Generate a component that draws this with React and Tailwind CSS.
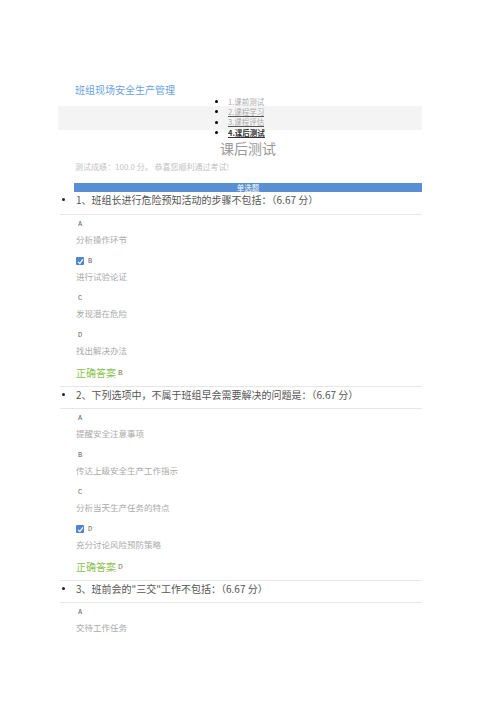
const navItems = [
  { label: '1.课前测试', cls: 'text-[#aaaaaa]' },
  { label: '2.课程学习', cls: 'text-[#aaaaaa] border-b border-[#555]' },
  { label: '3.课程评估', cls: 'text-[#aaaaaa] border-b border-[#555]' },
  { label: '4.课后测试', cls: 'text-[#333] font-bold border-b border-[#333]' },
]

const questions = [
  {
    title: '1、班组长进行危险预知活动的步骤不包括：（6.67 分）',
    options: [
      ['A', '分析操作环节'],
      ['B', '进行试验论证'],
      ['C', '发现潜在危险'],
      ['D', '找出解决办法'],
    ],
    picked: 'B',
    first: true,
  },
  {
    title: '2、下列选项中，不属于班组早会需要解决的问题是：（6.67 分）',
    options: [
      ['A', '提醒安全注意事项'],
      ['B', '传达上级安全生产工作指示'],
      ['C', '分析当天生产任务的特点'],
      ['D', '充分讨论风险预防策略'],
    ],
    picked: 'D',
  },
  {
    title: '3、班前会的"三交"工作不包括：（6.67 分）',
    options: [['A', '交待工作任务']],
    picked: null,
    partial: true,
  },
]

function Check() {
  return (
    <span className="flex h-[8px] w-[8px] items-center justify-center rounded-[1px] bg-[#4f86cf]">
      <svg width="7" height="7" viewBox="0 0 10 10">
        <path d="M1.5 5.5 L4 8 L8.5 2" fill="none" stroke="#fff" strokeWidth="1.8" />
      </svg>
    </span>
  )
}

function Question({ q }) {
  return (
    <li>
      <div
        className={`relative flex h-[23px] items-start border-b ${
          q.first ? '' : 'border-t'
        } border-[#e6e6e6] pt-[1px]`}
      >
        <span className="absolute left-[2px] top-[6px] h-[3px] w-[3px] rounded-full bg-[#222]" />
        <span className="ml-[16px] text-[10px] leading-[14px] text-[#555]">{q.title}</span>
      </div>
      <div className="pl-[16px] pt-[2px]">
        {q.options.map(([k, text]) => (
          <div key={k} className="mb-[7px]">
            <div className="flex h-[14px] items-center gap-[2px]">
              {q.picked === k && <Check />}
              <span className="font-['Liberation_Mono',monospace] text-[7px] text-[#666] pl-[2px]">{k}</span>
            </div>
            <div className="h-[16px] text-[8.5px] leading-[16px] text-[#aaaaaa]">{text}</div>
          </div>
        ))}
        {q.picked && (
          <div className="mb-[5px] flex h-[16px] items-center text-[10px] leading-[16px] text-[#8cc152]">
            正确答案
            <span className="ml-[2px] font-['Liberation_Mono',monospace] text-[8px] text-[#7d7d4a]">{q.picked}</span>
          </div>
        )}
      </div>
    </li>
  )
}

export default function App() {
  return (
    <div className="h-[702px] w-[496px] overflow-hidden bg-white pt-[84px] font-['Noto_Sans_CJK_SC','Liberation_Sans',sans-serif]">
      <div className="h-[12px] pl-[75px] text-[10px] leading-[12px] text-[#6aa3e0]">班组现场安全生产管理</div>

      <div className="ml-[58px] w-[364px] bg-[linear-gradient(to_bottom,transparent_10px,#f4f4f4_10px,#f4f4f4_34px,transparent_34px)]">
        <ul className="pl-[157px]">
          {navItems.map((n) => (
            <li key={n.label} className="flex h-[10.5px] items-center gap-[10px]">
              <span className="h-[3px] w-[3px] rounded-full bg-black" />
              <span className={`text-[7.5px] leading-[9px] ${n.cls}`}>{n.label}</span>
            </li>
          ))}
        </ul>
      </div>

      <div className="mt-[1px] h-[18px] text-center text-[14px] leading-[18px] text-[#999]">课后测试</div>

      <div className="mt-[4px] h-[12px] pl-[75px] text-[8px] leading-[12px] text-[#c2c2c2]">
        测试成绩：100.0 分。 恭喜您顺利通过考试!
      </div>

      <div className="ml-[74px] mt-[10px] flex h-[9px] w-[348px] items-center justify-center bg-[#5a8ed3] text-[7.5px] leading-[9px] text-white">
        单选题
      </div>

      <ul className="ml-[60px] w-[362px]">
        {questions.map((q, i) => (
          <Question key={i} q={q} />
        ))}
      </ul>
    </div>
  )
}
